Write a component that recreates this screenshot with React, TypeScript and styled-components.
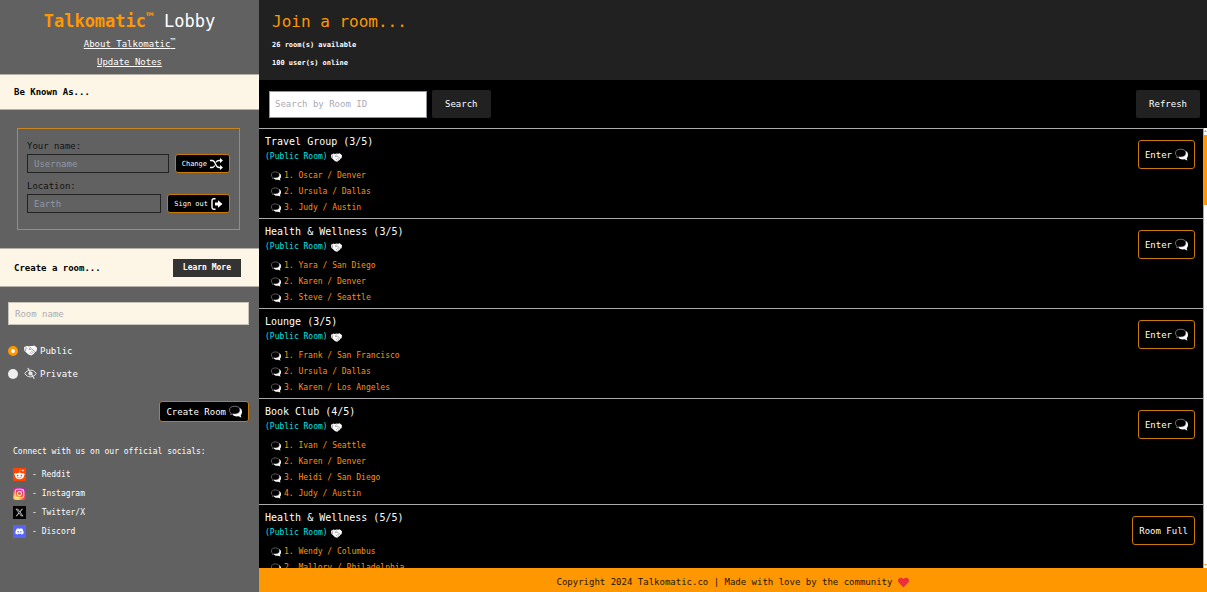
import React from "react";
import styled, { createGlobalStyle } from "styled-components";
import { FaDiscord, FaHeart, FaInstagram, FaRedditAlien } from "react-icons/fa";
import { FaXTwitter } from "react-icons/fa6";

const orange = "#ff9800";
const cream = "#fdf5e6";
const grey = "#616161";

const GlobalStyle = createGlobalStyle`
  *, *::before, *::after { box-sizing: border-box; }
  body { margin: 0; background: #000; }
  body, button, input {
    font-family: "DejaVu Sans Mono", "Liberation Mono", monospace;
    font-size: 9px;
    line-height: 16px;
  }
  h1, h2, h3, p, ul, ol { margin: 0; padding: 0; font-weight: 400; }
  ul, ol { list-style: none; }
  svg { display: block; flex: none; }
  button { cursor: pointer; }
`;

const Page = styled.div`
  display: grid;
  grid-template-columns: minmax(259px, 21%) minmax(0, 1fr);
  height: 100vh;
`;

/* Sidebar */

const Sidebar = styled.aside`
  background: ${grey};
  color: #fff;
  overflow-y: auto;
  scrollbar-width: none;
`;

const Brand = styled.header`
  display: flex;
  flex-direction: column;
  align-items: center;
  gap: 2px;
  height: 74px;
  padding-top: 8px;
`;

const Title = styled.h1`
  font-size: 17px;
  line-height: 26px;
`;

const BrandName = styled.strong`
  color: ${orange};
  font-weight: 700;
`;

const Mark = styled.sup<{ $size: number }>`
  font-size: ${(p) => p.$size}px;
  line-height: 0;
  vertical-align: ${(p) => (p.$size > 10 ? "5px" : "3px")};
`;

const BrandLink = styled.a`
  color: #fff;
  text-decoration: underline;
`;

const Band = styled.div<{ $tall?: boolean }>`
  display: flex;
  align-items: center;
  justify-content: space-between;
  height: ${(p) => (p.$tall ? 39 : 36)}px;
  padding: 0 18px 0 14px;
  border-top: 1px solid #b5b1a8;
  border-bottom: 1px solid #b5b1a8;
  background: ${cream};
  color: #000;
`;

const BandTitle = styled.h2`
  font-size: 9px;
  font-weight: 700;
`;

const LearnMore = styled.button`
  height: 18px;
  padding: 0 10px;
  border: 0;
  background: #333;
  color: #fff;
  font-size: 8px;
  font-weight: 700;
`;

const Identity = styled.form`
  display: flex;
  flex-direction: column;
  gap: 5px;
  margin: 18px 19px 18px 17px;
  padding: 9px 9px 16px;
  border: 1px solid #c98620;
  color: #111;
`;

const Field = styled.div`
  display: grid;
  grid-template-columns: 1fr auto;
  column-gap: 6px;
`;

const FieldLabel = styled.label`
  grid-column: 1 / -1;
`;

const FieldInput = styled.input`
  min-width: 0;
  width: 100%;
  height: 19px;
  padding: 0 6px;
  border: 1px solid #222;
  background: transparent;
  color: #fff;
  &::placeholder { color: #9298a3; opacity: 1; }
`;

const ActionButton = styled.button<{ $size: "small" | "medium" | "large" }>`
  display: flex;
  align-items: center;
  gap: 3px;
  height: ${(p) => ({ small: 19, medium: 21, large: 29 })[p.$size]}px;
  padding: 0 6px;
  border: 1px solid #c97a08;
  border-radius: 3px;
  background: #000;
  color: #fff;
  font-size: ${(p) => (p.$size === "small" ? 7 : 9)}px;
  white-space: nowrap;
`;

const CreateForm = styled.form`
  display: flex;
  flex-direction: column;
  padding: 15px 10px 0 8px;
`;

const RoomNameInput = styled.input`
  width: 100%;
  height: 23px;
  margin-bottom: 14px;
  padding: 0 6px;
  border: 1px solid #c9c4ba;
  background: ${cream};
  color: #000;
  &::placeholder { color: #adacb0; opacity: 1; }
`;

const Choice = styled.label`
  display: flex;
  align-items: center;
  gap: 3px;
  height: 23px;
`;

const Radio = styled.input`
  appearance: none;
  width: 10px;
  height: 10px;
  margin: 0 3px 0 0;
  border-radius: 50%;
  background: #efefef;
  &:checked { border: 3px solid ${orange}; background: #fff; }
`;

const CreateRow = styled.div`
  display: flex;
  justify-content: flex-end;
  padding-top: 16px;
`;

const Socials = styled.section`
  padding: 22px 13px 8px;
  font-size: 8px;
`;

const SocialList = styled.ul`
  display: flex;
  flex-direction: column;
  gap: 6px;
  padding-top: 8px;
`;

const SocialLink = styled.a`
  display: flex;
  align-items: center;
  gap: 6px;
  color: #fff;
  line-height: 13px;
  text-decoration: none;
`;

const SocialBadge = styled.span<{ $fill: string; $round?: boolean }>`
  display: grid;
  place-items: center;
  width: 13px;
  height: 13px;
  border-radius: ${(p) => (p.$round ? 3 : 0)}px;
  background: ${(p) => p.$fill};
`;

/* Main column */

const Main = styled.main`
  display: flex;
  flex-direction: column;
  min-height: 0;
  background: #000;
  color: #fff;
`;

const LobbyHeader = styled.header`
  display: flex;
  flex-direction: column;
  gap: 2px;
  padding: 8px 13px 9px;
  background: #212121;
`;

const LobbyTitle = styled.h2`
  color: ${orange};
  font-size: 16px;
  line-height: 27px;
`;

const Stat = styled.p`
  font-size: 7px;
  font-weight: 700;
`;

const Toolbar = styled.div`
  display: flex;
  align-items: center;
  justify-content: space-between;
  height: 48px;
  padding: 0 7px 0 10px;
`;

const SearchForm = styled.form`
  display: flex;
  align-items: center;
  gap: 5px;
`;

const SearchInput = styled.input`
  width: 158px;
  height: 27px;
  padding: 0 5px;
  border: 1px solid #8f959e;
  background: #fff;
  color: #000;
  &::placeholder { color: #aaaab4; opacity: 1; }
`;

const ToolButton = styled.button`
  height: 28px;
  padding: 0 13px;
  border: 0;
  border-radius: 2px;
  background: #212121;
  color: #fff;
`;

const ListArea = styled.div`
  display: flex;
  flex: 1;
  min-height: 0;
`;

const RoomList = styled.ul`
  flex: 1;
  min-width: 0;
  overflow-y: auto;
  scrollbar-width: none;
`;

const RoomItem = styled.li`
  display: flex;
  align-items: flex-start;
  justify-content: space-between;
  padding: 5px 8px 2px 6px;
  border-top: 1px solid #aaa;
`;

const RoomName = styled.h3`
  font-size: 10px;
  line-height: 16px;
`;

const RoomType = styled.p`
  display: flex;
  align-items: center;
  gap: 3px;
  margin-bottom: 4px;
  color: #00e5e5;
  font-size: 8px;
  line-height: 14px;
  svg { color: #fff; }
`;

const Member = styled.li`
  display: flex;
  align-items: center;
  gap: 3px;
  padding-left: 6px;
  color: #ff8f0a;
  font-size: 8px;
  line-height: 16px;
  svg { color: #fff; }
`;

const RoomAction = styled.div`
  padding-top: 6px;
`;

const ScrollRail = styled.div`
  display: flex;
  flex-direction: column;
  justify-content: space-between;
  width: 4px;
  border-left: 1px solid #aaa;
  background: #fff;
`;

const ScrollThumb = styled.div`
  flex: 0 0 16%;
  margin: 1px 0 auto;
  background: ${orange};
`;

const RailArrow = styled.div<{ $down?: boolean }>`
  height: 6px;
  display: flex;
  align-items: center;
  justify-content: center;
  transform: ${(p) => (p.$down ? "rotate(180deg)" : "none")};
`;

const Footer = styled.footer`
  display: flex;
  align-items: center;
  justify-content: center;
  gap: 6px;
  height: 24px;
  padding-top: 4px;
  background: ${orange};
  color: #221400;
`;

/* Icons */

const ChatIcon = ({ size = 13 }: { size?: number }) => (
  <svg width={size} height={size} viewBox="0 0 26 26" aria-hidden="true">
    <path d="M21 6c3.300 1.200 5 3.600 5 7.400 0 3-.9 5.200-2.600 6.800.1 1.800.6 3.200 1.600 4.600-2.300-.2-4.100-.9-5.500-2.300-5 .8-9.500.2-12.500-3.500z" fill="currentColor" />
    <path d="M11.500 2.500C5.200 2.500 1 4.900 1 10.200c0 2.900 1.200 4.900 3.300 6.200 0 1.200-.3 2.100-1 3 1.700-.1 3.100-.6 4.200-1.700 1.200.3 2.600.4 4 .4 6.300 0 10.500-2.500 10.500-7.900S17.800 2.500 11.500 2.500z" fill="#000" stroke="#b4b4b4" strokeWidth="1.200" />
  </svg>
);

const ShuffleIcon = () => (
  <svg width="13" height="12" viewBox="0 0 26 24" fill="none" stroke="currentColor" strokeWidth="2.600" aria-hidden="true">
    <path d="M0 5h4.500c3 0 4.500 2 6.500 7s4 7 7 7h3M0 19h4.500c2.200 0 3.600-1.200 5-4M12 8.500C13.600 5.900 15.300 5 18 5h3" />
    <path d="M20 0l6 5-6 5zM20 14l6 5-6 5z" fill="currentColor" stroke="none" />
  </svg>
);

const SignOutIcon = () => (
  <svg width="12" height="12" viewBox="0 0 24 24" aria-hidden="true">
    <path d="M9 1.500H5.500c-2 0-3.500 1.500-3.500 3.500v14c0 2 1.500 3.500 3.500 3.500H9" fill="none" stroke="currentColor" strokeWidth="2.800" />
    <path d="M8 9h6V4.500l9 7.500-9 7.500V15H8z" fill="currentColor" />
  </svg>
);

const Handshake = ({ size }: { size: number }) => (
  <svg width={size} height={size} viewBox="0 0 26 26" aria-hidden="true">
    <path d="M0 6.500l6-3 3 1.300 4-1 4 .2 3.500-1 5.500 4.500-1 7-3 1.500-1.500 3-3 1.800-2.500 2.200-3-.8-3-1.200-3-2.500-3-3L1 14z" fill="currentColor" />
    <path d="M14 6l-4.500 4c1 1.800 3 1.500 5.200-.6l7.300 6M14.500 14l4.500 3.800M11.500 16.500l4 3.500M4.500 5.500L3 14.500" fill="none" stroke="#555" strokeWidth="1.200" />
  </svg>
);

const HiddenIcon = () => (
  <svg width="13" height="13" viewBox="0 0 26 26" fill="none" stroke="#e4e4e4" aria-hidden="true">
    <path d="M1.500 13C4.500 8.500 8.300 6.300 13 6.300S21.500 8.500 24.500 13c-3 4.500-6.800 6.700-11.500 6.700S4.500 17.500 1.500 13z" strokeWidth="2" />
    <circle cx="13" cy="13" r="4.200" fill="#e4e4e4" stroke="none" />
    <path d="M7.500 2l13 21.500" strokeWidth="2.200" />
  </svg>
);

type Room = { name: string; count: number; members: string[] };

const rooms: Room[] = [
  { name: "Travel Group", count: 3, members: ["Oscar / Denver", "Ursula / Dallas", "Judy / Austin"] },
  { name: "Health & Wellness", count: 3, members: ["Yara / San Diego", "Karen / Denver", "Steve / Seattle"] },
  { name: "Lounge", count: 3, members: ["Frank / San Francisco", "Ursula / Dallas", "Karen / Los Angeles"] },
  { name: "Book Club", count: 4, members: ["Ivan / Seattle", "Karen / Denver", "Heidi / San Diego", "Judy / Austin"] },
  { name: "Health & Wellness", count: 5, members: ["Wendy / Columbus", "Mallory / Philadelphia"] },
];

const instagramFill = "radial-gradient(circle at 25% 100%, #ffd25a 0 15%, #f9622e 40%, #d62d86 65%, #7038cf 100%)";

const socials = [
  { name: "Reddit", fill: "#ff4500", icon: <FaRedditAlien size={11} /> },
  { name: "Instagram", fill: instagramFill, round: true, icon: <FaInstagram size={11} /> },
  { name: "Twitter/X", fill: "#000", icon: <FaXTwitter size={9} color="#ccc" /> },
  { name: "Discord", fill: "#5865f2", icon: <FaDiscord size={9} /> },
];

const RoomRow = ({ room }: { room: Room }) => (
  <RoomItem>
    <div>
      <RoomName>{`${room.name} (${room.count}/5)`}</RoomName>
      <RoomType>
        (Public Room) <Handshake size={11} />
      </RoomType>
      <ol>
        {room.members.map((member, i) => (
          <Member key={member}>
            <ChatIcon size={10} />
            {`${i + 1}. ${member}`}
          </Member>
        ))}
      </ol>
    </div>
    <RoomAction>
      {room.count < 5 ? (
        <ActionButton type="button" $size="large">
          Enter <ChatIcon />
        </ActionButton>
      ) : (
        <ActionButton type="button" $size="large">Room Full</ActionButton>
      )}
    </RoomAction>
  </RoomItem>
);

export default function App() {
  return (
    <>
      <GlobalStyle />
      <Page>
        <Sidebar>
          <Brand>
            <Title>
              <BrandName>Talkomatic<Mark $size={13}>™</Mark></BrandName> Lobby
            </Title>
            <BrandLink href="#about">About Talkomatic<Mark $size={8}>™</Mark></BrandLink>
            <BrandLink href="#notes">Update Notes</BrandLink>
          </Brand>
          <Band>
            <BandTitle>Be Known As...</BandTitle>
          </Band>
          <Identity>
            <Field>
              <FieldLabel htmlFor="username">Your name:</FieldLabel>
              <FieldInput id="username" placeholder="Username" />
              <ActionButton type="button" $size="small">
                Change <ShuffleIcon />
              </ActionButton>
            </Field>
            <Field>
              <FieldLabel htmlFor="location">Location:</FieldLabel>
              <FieldInput id="location" placeholder="Earth" />
              <ActionButton type="button" $size="small">
                Sign out <SignOutIcon />
              </ActionButton>
            </Field>
          </Identity>
          <Band $tall>
            <BandTitle>Create a room...</BandTitle>
            <LearnMore type="button">Learn More</LearnMore>
          </Band>
          <CreateForm>
            <RoomNameInput placeholder="Room name" aria-label="Room name" />
            <Choice>
              <Radio type="radio" name="visibility" defaultChecked />
              <Handshake size={13} />
              Public
            </Choice>
            <Choice>
              <Radio type="radio" name="visibility" />
              <HiddenIcon />
              Private
            </Choice>
            <CreateRow>
              <ActionButton type="button" $size="medium">
                Create Room <ChatIcon />
              </ActionButton>
            </CreateRow>
          </CreateForm>
          <Socials>
            <p>Connect with us on our official socials:</p>
            <SocialList>
              {socials.map((s) => (
                <li key={s.name}>
                  <SocialLink href={`#${s.name.toLowerCase()}`}>
                    <SocialBadge $fill={s.fill} $round={s.round}>{s.icon}</SocialBadge>
                    {`- ${s.name}`}
                  </SocialLink>
                </li>
              ))}
            </SocialList>
          </Socials>
        </Sidebar>
        <Main>
          <LobbyHeader>
            <LobbyTitle>Join a room...</LobbyTitle>
            <Stat>26 room(s) available</Stat>
            <Stat>100 user(s) online</Stat>
          </LobbyHeader>
          <Toolbar>
            <SearchForm>
              <SearchInput placeholder="Search by Room ID" aria-label="Search by Room ID" />
              <ToolButton type="button">Search</ToolButton>
            </SearchForm>
            <ToolButton type="button">Refresh</ToolButton>
          </Toolbar>
          <ListArea>
            <RoomList>
              {rooms.map((room, i) => (
                <RoomRow key={i} room={room} />
              ))}
            </RoomList>
            <ScrollRail aria-hidden="true">
              <RailArrow>
                <svg width="3" height="2" viewBox="0 0 3 2"><path d="M1.500 0L3 2H0z" fill={orange} /></svg>
              </RailArrow>
              <ScrollThumb />
              <RailArrow $down>
                <svg width="3" height="2" viewBox="0 0 3 2"><path d="M1.500 0L3 2H0z" fill={orange} /></svg>
              </RailArrow>
            </ScrollRail>
          </ListArea>
          <Footer>
            Copyright 2024 Talkomatic.co | Made with love by the community
            <FaHeart size={11} color="#ec2f3f" aria-hidden="true" />
          </Footer>
        </Main>
      </Page>
    </>
  );
}
